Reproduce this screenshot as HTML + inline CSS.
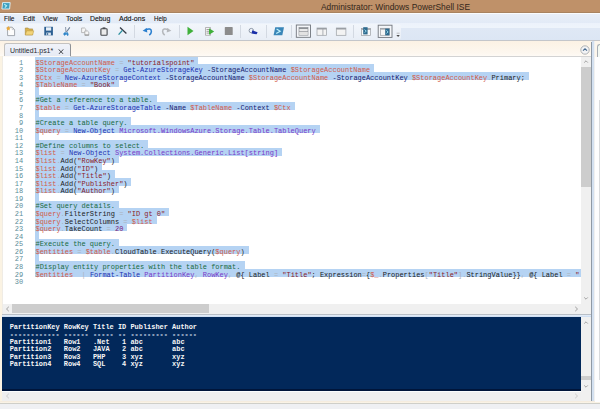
<!DOCTYPE html>
<html><head><meta charset="utf-8">
<style>
*{margin:0;padding:0;box-sizing:border-box}
html,body{width:600px;height:409px;overflow:hidden;background:#f0f0f0;font-family:"Liberation Sans",sans-serif}
.abs{position:absolute}
#title{position:absolute;left:0;top:0;width:600px;height:13px;background:#bf9169;border-bottom:1px solid #a98360}
#ttext{position:absolute;left:321.2px;top:1.6px;font-size:8.7px;line-height:11px;color:#33261a;white-space:nowrap;transform-origin:0 0;transform:scaleX(0.968)}
#menu{position:absolute;left:0;top:13px;width:600px;height:11px;background:linear-gradient(#e9eff8,#e1eaf6);border-top:1.5px solid #fafcfe}
.mi{position:absolute;font-size:8.1px;line-height:9px;color:#111;-webkit-text-stroke:0.12px #111;white-space:nowrap;transform-origin:0 0}
#tb{position:absolute;left:0;top:23px;width:600px;height:17.5px;background:linear-gradient(#ecf2fb 0,#eef4fb 5px,#dfe8f5 5.5px,#dce6f4);border-bottom:1px solid #c4c6ca}
#tbband{position:absolute;left:0;top:24px;width:401px;height:15.5px;background:linear-gradient(#f2f6fb,#e8eef6);border-radius:0 3px 3px 0}
.sep{position:absolute;top:25px;width:1px;height:13px;background:#d3d9e2}
#tabstrip{position:absolute;left:0;top:40.5px;width:591px;height:16px;background:linear-gradient(#fcf2e4,#fdf7ef 12px,#fefbf7)}
#tab{position:absolute;left:3.6px;top:42.8px;width:67px;height:13.7px;border:1px solid #c4c2c0;border-right-color:#8e9196;border-bottom:none;border-radius:2.5px 2.5px 0 0;background:linear-gradient(#f1f3f9,#e6eaf4)}
#tabt{position:absolute;left:9.9px;top:45.6px;font-size:7.3px;line-height:10px;color:#262a30;white-space:nowrap;transform-origin:0 0;transform:scaleX(0.95)}
#tabx{position:absolute;left:57.6px;top:48.6px;width:6px;height:5.5px}
#stripline{position:absolute;left:70px;top:55.8px;width:521px;height:1px;background:#d3d3d3}
#leftstrip{position:absolute;left:0;top:56px;width:3px;height:347px;background:linear-gradient(90deg,#fbf3e3 1.8px,#eeebe6 2.6px)}
#editor{position:absolute;left:3px;top:56.5px;width:578px;height:247px;background:#fff;overflow:hidden}
.sl{position:absolute;left:32px;height:7.8px;background:#b5d3f3}
.cl,.ln{position:absolute;font-family:"Liberation Mono",monospace;font-size:6.98px;line-height:7.57px;white-space:pre;margin-top:2.7px}
.cl{left:32.5px}
.ln{left:0;width:20.1px;text-align:right;color:#5a8d99}
i{font-style:normal}
.v{color:#d25a48}.o{color:#aab2bb}.s{color:#8a1c2a}.c{color:#1d2fb0}.p{color:#18206e}.m{color:#176a40}.a{color:#7a38c8}.n{color:#7a1a7a}.k{color:#1c1c1c}
#vs{position:absolute;left:581px;top:56.5px;width:10px;height:247px;background:#f0f0f0}
#vsthumb{position:absolute;left:581px;top:67px;width:10.3px;height:119.6px;background:#cdcdcd}
#hs{position:absolute;left:3px;top:303.5px;width:578px;height:10px;background:#f0f0f0}
#hsthumb{position:absolute;left:12px;top:303.6px;width:197.3px;height:9.6px;background:#cdcdcd}
#corner{position:absolute;left:581px;top:303.5px;width:10px;height:10px;background:#f0f0f0}
#split{position:absolute;left:2px;top:313.5px;width:589px;height:3.5px;background:linear-gradient(#b9bfc6 0,#b9bfc6 0.6px,#eef4fb 0.6px,#c9daf0 3px,#1c2f52 3.5px)}
#console{position:absolute;left:2px;top:317px;width:579px;height:73.7px;background:linear-gradient(#02285a 72.5px,#00153a 72.5px)}
.cc{position:absolute;left:9.7px;font-family:"Liberation Mono",monospace;font-size:6.95px;line-height:7.5px;white-space:pre;color:#f6f6f6;font-weight:bold}
.dash{color:#8fa2be;text-shadow:0 0.9px 0 #8fa2be}
#cvs{position:absolute;left:581px;top:317px;width:10px;height:84px;background:#f0f0f0}
#chs{position:absolute;left:2px;top:390.7px;width:579px;height:10px;background:linear-gradient(#fafcfd 1.2px,#efefef 1.2px)}
#botline{position:absolute;left:0;top:400.5px;width:600px;height:3px;background:linear-gradient(#f3e9db 0,#faf3e6 1.6px,#c9c9c2 2.2px,#d8d8d4 3px)}
#status{position:absolute;left:0;top:403.5px;width:600px;height:5.5px;background:#eff0f3}
#rsep1{position:absolute;left:591.2px;top:41.5px;width:1.1px;height:359.5px;background:#8f99a5}
#rsep2{position:absolute;left:592.2px;top:41px;width:2.3px;height:360px;background:#d3e0f0}
#rpanel{position:absolute;left:594.5px;top:40.5px;width:5.5px;height:361px;background:#fdfdfe}
#rtab{position:absolute;left:597px;top:44px;width:4px;height:12.5px;border-left:1px solid #a9afb6;border-top:1px solid #a9afb6;border-radius:3px 0 0 0;background:linear-gradient(#f2f8ef,#f4f8f6)}
#rline{position:absolute;left:598.6px;top:100px;width:1px;height:280px;background:#d8dadd}
#rtop{position:absolute;left:594.5px;top:40.5px;width:5.5px;height:16px;background:#fdf6ec}
.arr{position:absolute;font-size:7px;line-height:7px;color:#8a8a8a}
</style></head><body>
<div id="title"></div>
<svg class="abs" style="left:0;top:0" width="14" height="13" viewBox="0 0 14 13"><path d="M2.6 2.6 H10.2 L9.6 9 H1.9 Z" fill="#3d9fbf" stroke="#e4f3f8" stroke-width="0.9"/><path d="M4.3 4.2 L6.6 5.8 L4.8 7.6" stroke="#b8f0f8" stroke-width="1.1" fill="none"/></svg>
<div id="ttext">Administrator: Windows PowerShell ISE</div>
<div id="menu"></div>
<div class="mi" style="left:3.70px;top:14.2px;transform:scaleX(0.805)">File</div>
<div class="mi" style="left:22.50px;top:14.2px;transform:scaleX(0.856)">Edit</div>
<div class="mi" style="left:42.60px;top:14.2px;transform:scaleX(0.834)">View</div>
<div class="mi" style="left:65.50px;top:14.2px;transform:scaleX(0.864)">Tools</div>
<div class="mi" style="left:89.70px;top:14.2px;transform:scaleX(0.850)">Debug</div>
<div class="mi" style="left:119.00px;top:14.2px;transform:scaleX(0.870)">Add-ons</div>
<div class="mi" style="left:154.20px;top:14.2px;transform:scaleX(0.767)">Help</div>
<div id="tb"></div><div id="tbband"></div>
<svg class="abs" style="left:0;top:24px" width="410" height="16" viewBox="0 24 410 16">
<!-- new -->
<path d="M7.6 27.2 H12.2 L14.6 29.6 V35.6 H7.6 Z" fill="#fdfdfd" stroke="#8e949c" stroke-width="0.8"/>
<path d="M12.2 27.2 V29.6 H14.6" fill="none" stroke="#b0b4ba" stroke-width="0.6"/>
<path d="M8.3 26 L9.1 27.5 L10.6 27.8 L9.5 28.9 L9.8 30.4 L8.3 29.7 L6.8 30.4 L7.1 28.9 L6 27.8 L7.5 27.5 Z" fill="#eaa93a"/>
<!-- open -->
<path d="M25.3 28 H28.2 L29 28.9 H32.6 V34.9 H25.3 Z" fill="#d9b24e" stroke="#a98a3a" stroke-width="0.6"/>
<path d="M25.3 34.9 L26.6 30.8 H33.8 L32.6 34.9 Z" fill="#f2d47a" stroke="#b8963e" stroke-width="0.5"/>
<!-- save -->
<rect x="44.3" y="26.8" width="8.6" height="8.6" fill="#2b5f92"/>
<rect x="46" y="27.3" width="5.2" height="3.3" fill="#e9f0f7"/>
<rect x="46.3" y="32.6" width="4.6" height="2.8" fill="#dce6f0"/>
<rect x="47" y="33.2" width="1.2" height="1.6" fill="#2b5f92"/>
<!-- cut -->
<path d="M65.6 27 L65.9 32" stroke="#8a98aa" stroke-width="1"/>
<path d="M69.8 27.4 L66.4 32" stroke="#6d7f96" stroke-width="1.1"/>
<path d="M64 33 Q63.3 35.3 65 35.2 Q66.2 34.6 66 32.8 Z M66.6 32.8 Q66.6 35.6 68 35.4 Q68.4 34 67.4 32.6 Z" fill="#2f86c8" stroke="#2f86c8" stroke-width="0.9"/>
<!-- copy -->
<path d="M81.6 28 H84.6 L85.8 29.2 V32.6 H81.6 Z" fill="#f6f6f6" stroke="#a2a2a2" stroke-width="0.7"/>
<path d="M84.8 31 H87.6 L88.8 32.2 V35.2 H84.8 Z" fill="#f6f6f6" stroke="#a2a2a2" stroke-width="0.7"/>
<path d="M84.8 35 H88.8" stroke="#7a7a7a" stroke-width="0.8"/>
<!-- paste -->
<rect x="100.9" y="28.7" width="6.2" height="6.5" rx="0.7" fill="#ececec" stroke="#46494d" stroke-width="1.1"/>
<rect x="102.6" y="27.4" width="2.8" height="1.5" fill="#46494d"/>
<!-- clear -->
<path d="M120 27.6 L126.4 33.4" stroke="#343c46" stroke-width="1.3"/>
<path d="M118.6 34.6 L122.4 30.4" stroke="#2b8f9e" stroke-width="1.4"/>
<!-- undo -->
<path d="M145.2 29.7 Q151.3 27.6 151.4 31.4 Q151.3 33.6 149.3 35.2" stroke="#2a7fcf" stroke-width="1.5" fill="none"/>
<path d="M142.6 30.8 L146.8 28 L147.3 32.6 Z" fill="#2a7fcf"/>
<!-- redo -->
<path d="M168.8 29.7 Q162.7 27.6 162.6 31.4 Q162.7 33.6 164.7 35.2" stroke="#b4b7bb" stroke-width="1.5" fill="none"/>
<path d="M171.4 30.8 L167.2 28 L166.7 32.6 Z" fill="#b4b7bb"/>
<!-- run -->
<path d="M187.5 26.8 L193.5 31 L187.5 35.3 Z" fill="#3fb03a"/>
<!-- run selection -->
<path d="M205.5 27.5 H210.5 V35.3 H205.5 Z" fill="#f6f6f6" stroke="#9a9a9a" stroke-width="0.7"/>
<path d="M206.5 29.5 H209 M206.5 31.3 H209 M206.5 33.1 H209" stroke="#7a7a7a" stroke-width="0.7"/>
<path d="M209 28.3 L214.2 31.5 L209 34.8 Z" fill="#3fb03a"/>
<!-- stop -->
<rect x="224.8" y="27.1" width="7.9" height="7.9" rx="0.6" fill="#8c8c8c"/>
<!-- remote -->
<circle cx="251.3" cy="30.6" r="2.2" fill="none" stroke="#8d98a8" stroke-width="1"/>
<path d="M252.2 30.2 L257.6 32.3 L256.6 34.2 L251.6 33.6 Z" fill="#1a2fa8"/>
<!-- PS -->
<path d="M275.2 27.2 H284 L282.3 35.2 H273.6 Z" fill="#3a86b8"/>
<path d="M276.6 28.9 L280.2 31.2 L276.2 33.6" stroke="#bff0fb" stroke-width="1.2" fill="none"/>
<!-- pressed layout btn -->
<rect x="296.3" y="25" width="14.2" height="12.3" fill="#f4f6f9" stroke="#70757c" stroke-width="0.9"/>
<rect x="299" y="27.6" width="9" height="7.6" fill="#f3f3f3" stroke="#8d9196" stroke-width="0.7"/>
<rect x="299" y="27.6" width="9" height="1.5" fill="#8d9196"/>
<path d="M299 31.4 H308" stroke="#8d9196" stroke-width="0.8"/>
<rect x="299.6" y="32" width="7.8" height="2.8" fill="#e2e2e2"/>
<!-- layout 2 -->
<rect x="317" y="28" width="9.5" height="7.3" fill="#f3f3f3" stroke="#9a9ea4" stroke-width="0.7"/>
<rect x="317" y="28" width="9.5" height="1.5" fill="#9a9ea4"/>
<path d="M322.9 28 V35.3" stroke="#9a9ea4" stroke-width="0.8"/>
<!-- layout 3 -->
<rect x="336.3" y="28" width="9.6" height="7.3" fill="#f3f3f3" stroke="#9a9ea4" stroke-width="0.7"/>
<rect x="336.3" y="28" width="9.6" height="1.5" fill="#9a9ea4"/>
<!-- show script pane -->
<rect x="361.6" y="28.6" width="9" height="6.8" fill="#fafafa" stroke="#9a9ea4" stroke-width="0.7"/>
<rect x="361.6" y="28.6" width="9" height="1.2" fill="#9a9ea4"/>
<rect x="363.2" y="27.2" width="4.4" height="7.2" fill="#2e6a8e"/>
<path d="M364.5 29.6 L366.3 31.1 L364.5 32.6" stroke="#9fe2f5" stroke-width="0.9" fill="none"/>
<!-- pressed show script pane right -->
<rect x="378.2" y="25.2" width="13.8" height="12.2" fill="#f4f6f9" stroke="#70757c" stroke-width="0.9"/>
<rect x="380.6" y="28.3" width="8.8" height="7" fill="#f6f6f6" stroke="#9a9ea4" stroke-width="0.7"/>
<rect x="380.6" y="28.3" width="8.8" height="1.3" fill="#9a9ea4"/>
<rect x="385.2" y="28.6" width="4.2" height="6.7" fill="#2e6a8e"/>
<path d="M386.4 30.4 L388.1 31.9 L386.4 33.4" stroke="#9fe2f5" stroke-width="0.9" fill="none"/>
<!-- overflow -->
<path d="M396.6 33.2 H399.6" stroke="#9a9a9a" stroke-width="0.6"/>
<path d="M396.4 35.1 H399.8 L398.1 37 Z" fill="#4a4a4a"/>
</svg>
<div class="sep" style="left:134px"></div>
<div class="sep" style="left:178.5px"></div>
<div class="sep" style="left:240px"></div>
<div class="sep" style="left:266px"></div>
<div class="sep" style="left:291px"></div>
<div class="sep" style="left:353px"></div>

<div id="tabstrip"></div>
<div id="stripline"></div>
<div id="leftstrip"></div>
<div id="tab"></div>
<div id="tabt">Untitled1.ps1*</div>
<svg id="tabx" viewBox="0 0 6 5.5"><path d="M0.5 0.3 L5.5 5.2 M5.5 0.3 L0.5 5.2" stroke="#3a3d42" stroke-width="0.95"/></svg>
<svg class="abs" style="left:579.5px;top:45px" width="10" height="10" viewBox="0 0 10 10"><circle cx="5" cy="5" r="4.2" fill="#f2f3f5" stroke="#a9abae" stroke-width="0.9"/><path d="M3 5.6 L5 3.8 L7 5.6" stroke="#46698e" stroke-width="1.1" fill="none"/></svg>
<div id="editor">
<div class="sl" style="top:0.40px;width:163.41px;height:7.8px"></div>
<div class="sl" style="top:7.97px;width:339.39px;height:7.8px"></div>
<div class="sl" style="top:15.54px;width:494.42px;height:7.8px"></div>
<div class="sl" style="top:23.11px;width:83.80px;height:7.8px"></div>
<div class="sl" style="top:30.68px;width:4.19px;height:7.8px"></div>
<div class="sl" style="top:38.25px;width:121.51px;height:7.8px"></div>
<div class="sl" style="top:45.82px;width:259.78px;height:7.8px"></div>
<div class="sl" style="top:53.39px;width:4.19px;height:7.8px"></div>
<div class="sl" style="top:60.96px;width:96.37px;height:7.8px"></div>
<div class="sl" style="top:68.53px;width:284.92px;height:7.8px"></div>
<div class="sl" style="top:76.10px;width:4.19px;height:7.8px"></div>
<div class="sl" style="top:83.67px;width:113.13px;height:7.8px"></div>
<div class="sl" style="top:91.24px;width:247.21px;height:7.8px"></div>
<div class="sl" style="top:98.81px;width:83.80px;height:7.8px"></div>
<div class="sl" style="top:106.38px;width:67.04px;height:7.8px"></div>
<div class="sl" style="top:113.95px;width:79.61px;height:7.8px"></div>
<div class="sl" style="top:121.52px;width:96.37px;height:7.8px"></div>
<div class="sl" style="top:129.09px;width:83.80px;height:7.8px"></div>
<div class="sl" style="top:136.66px;width:4.19px;height:7.8px"></div>
<div class="sl" style="top:144.23px;width:83.80px;height:7.8px"></div>
<div class="sl" style="top:151.80px;width:134.08px;height:7.8px"></div>
<div class="sl" style="top:159.37px;width:121.51px;height:7.8px"></div>
<div class="sl" style="top:166.94px;width:92.18px;height:7.8px"></div>
<div class="sl" style="top:174.51px;width:4.19px;height:7.8px"></div>
<div class="sl" style="top:182.08px;width:83.80px;height:7.8px"></div>
<div class="sl" style="top:189.65px;width:213.69px;height:7.8px"></div>
<div class="sl" style="top:197.22px;width:4.19px;height:7.8px"></div>
<div class="sl" style="top:204.79px;width:209.50px;height:7.8px"></div>
<div class="sl" style="top:212.36px;width:600.00px;height:8.6px"></div>
<div class="ln" style="top:0.40px">1</div>
<div class="ln" style="top:7.97px">2</div>
<div class="ln" style="top:15.54px">3</div>
<div class="ln" style="top:23.11px">4</div>
<div class="ln" style="top:30.68px">5</div>
<div class="ln" style="top:38.25px">6</div>
<div class="ln" style="top:45.82px">7</div>
<div class="ln" style="top:53.39px">8</div>
<div class="ln" style="top:60.96px">9</div>
<div class="ln" style="top:68.53px">10</div>
<div class="ln" style="top:76.10px">11</div>
<div class="ln" style="top:83.67px">12</div>
<div class="ln" style="top:91.24px">13</div>
<div class="ln" style="top:98.81px">14</div>
<div class="ln" style="top:106.38px">15</div>
<div class="ln" style="top:113.95px">16</div>
<div class="ln" style="top:121.52px">17</div>
<div class="ln" style="top:129.09px">18</div>
<div class="ln" style="top:136.66px">19</div>
<div class="ln" style="top:144.23px">20</div>
<div class="ln" style="top:151.80px">21</div>
<div class="ln" style="top:159.37px">22</div>
<div class="ln" style="top:166.94px">23</div>
<div class="ln" style="top:174.51px">24</div>
<div class="ln" style="top:182.08px">25</div>
<div class="ln" style="top:189.65px">26</div>
<div class="ln" style="top:197.22px">27</div>
<div class="ln" style="top:204.79px">28</div>
<div class="ln" style="top:212.36px">29</div>
<div class="ln" style="top:219.93px">30</div>
<div class="cl" style="top:0.40px"><i class="v">$StorageAccountName</i><i class="o"> = </i><i class="s">&quot;tutorialspoint&quot;</i></div>
<div class="cl" style="top:7.97px"><i class="v">$StorageAccountKey</i><i class="o"> = </i><i class="c">Get-AzureStorageKey</i> <i class="p">-StorageAccountName</i> <i class="v">$StorageAccountName</i></div>
<div class="cl" style="top:15.54px"><i class="v">$Ctx</i><i class="o"> = </i><i class="c">New-AzureStorageContext</i> <i class="p">-StorageAccountName</i> <i class="v">$StorageAccountName</i> <i class="p">-StorageAccountKey</i> <i class="v">$StorageAccountKey</i><i class="o">.</i><i class="k">Primary;</i></div>
<div class="cl" style="top:23.11px"><i class="v">$TableName</i><i class="o"> = </i><i class="s">&quot;Book&quot;</i></div>
<div class="cl" style="top:30.68px"></div>
<div class="cl" style="top:38.25px"><i class="m">#Get a reference to a table.</i></div>
<div class="cl" style="top:45.82px"><i class="v">$table</i><i class="o"> = </i><i class="c">Get-AzureStorageTable</i> <i class="p">-Name</i> <i class="v">$TableName</i> <i class="p">-Context</i> <i class="v">$Ctx</i></div>
<div class="cl" style="top:53.39px"></div>
<div class="cl" style="top:60.96px"><i class="m">#Create a table query.</i></div>
<div class="cl" style="top:68.53px"><i class="v">$query</i><i class="o"> = </i><i class="c">New-Object</i> <i class="a">Microsoft.WindowsAzure.Storage.Table.TableQuery</i></div>
<div class="cl" style="top:76.10px"></div>
<div class="cl" style="top:83.67px"><i class="m">#Define columns to select.</i></div>
<div class="cl" style="top:91.24px"><i class="v">$list</i><i class="o"> = </i><i class="c">New-Object</i> <i class="a">System.Collections.Generic.List[string]</i></div>
<div class="cl" style="top:98.81px"><i class="v">$list</i><i class="o">.</i><i class="k">Add(</i><i class="s">&quot;RowKey&quot;</i><i class="k">)</i></div>
<div class="cl" style="top:106.38px"><i class="v">$list</i><i class="o">.</i><i class="k">Add(</i><i class="s">&quot;ID&quot;</i><i class="k">)</i></div>
<div class="cl" style="top:113.95px"><i class="v">$list</i><i class="o">.</i><i class="k">Add(</i><i class="s">&quot;Title&quot;</i><i class="k">)</i></div>
<div class="cl" style="top:121.52px"><i class="v">$list</i><i class="o">.</i><i class="k">Add(</i><i class="s">&quot;Publisher&quot;</i><i class="k">)</i></div>
<div class="cl" style="top:129.09px"><i class="v">$list</i><i class="o">.</i><i class="k">Add(</i><i class="s">&quot;Author&quot;</i><i class="k">)</i></div>
<div class="cl" style="top:136.66px"></div>
<div class="cl" style="top:144.23px"><i class="m">#Set query details.</i></div>
<div class="cl" style="top:151.80px"><i class="v">$query</i><i class="o">.</i><i class="k">FilterString</i><i class="o"> = </i><i class="s">&quot;ID gt 0&quot;</i></div>
<div class="cl" style="top:159.37px"><i class="v">$query</i><i class="o">.</i><i class="k">SelectColumns</i><i class="o"> = </i><i class="v">$list</i></div>
<div class="cl" style="top:166.94px"><i class="v">$query</i><i class="o">.</i><i class="k">TakeCount</i><i class="o"> = </i><i class="n">20</i></div>
<div class="cl" style="top:174.51px"></div>
<div class="cl" style="top:182.08px"><i class="m">#Execute the query.</i></div>
<div class="cl" style="top:189.65px"><i class="v">$entities</i><i class="o"> = </i><i class="v">$table</i><i class="o">.</i><i class="k">CloudTable</i><i class="o">.</i><i class="k">ExecuteQuery(</i><i class="v">$query</i><i class="k">)</i></div>
<div class="cl" style="top:197.22px"></div>
<div class="cl" style="top:204.79px"><i class="m">#Display entity properties with the table format.</i></div>
<div class="cl" style="top:212.36px"><i class="v">$entities</i><i class="o">  | </i><i class="c">Format-Table</i> <i class="a">PartitionKey</i><i class="o">, </i><i class="a">RowKey</i><i class="o">, </i><i class="k">@{ Label</i><i class="o"> = </i><i class="s">&quot;Title&quot;</i><i class="k">; Expression</i><i class="o">=</i><i class="k">{</i><i class="v">$_</i><i class="o">.</i><i class="k">Properties</i><i class="o">[</i><i class="s">&quot;Title&quot;</i><i class="o">].</i><i class="k">StringValue}}</i><i class="o">, </i><i class="k">@{ Label</i><i class="o"> = </i><i class="s">&quot;</i></div>
<div class="cl" style="top:219.93px"></div>
</div>
<div id="vs"></div>
<div id="vsthumb"></div>
<svg class="abs" style="left:583px;top:59px" width="6" height="5" viewBox="0 0 6 5"><path d="M1.2 3.6 L3 1.8 L4.8 3.6" stroke="#8a8a8a" stroke-width="0.75" fill="none"/></svg>
<svg class="abs" style="left:583px;top:296px" width="6" height="5" viewBox="0 0 6 5"><path d="M1.2 1.4 L3 3.2 L4.8 1.4" stroke="#8a8a8a" stroke-width="0.75" fill="none"/></svg>
<div id="hs"></div>
<div id="hsthumb"></div>
<svg class="abs" style="left:5px;top:305.5px" width="5" height="6" viewBox="0 0 5 6"><path d="M3.8 0.8 L1.5 3 L3.8 5.2" stroke="#8a8a8a" stroke-width="0.8" fill="none"/></svg>
<svg class="abs" style="left:574px;top:305.5px" width="5" height="6" viewBox="0 0 5 6"><path d="M1.2 0.8 L3.5 3 L1.2 5.2" stroke="#8a8a8a" stroke-width="0.8" fill="none"/></svg>
<div id="corner"></div>
<div id="split"></div>
<div id="console">
</div>
<div class="cc" style="top:323.80px">PartitionKey RowKey Title ID Publisher Author</div>
<div class="cc dash" style="top:331.30px">------------ ------ ----- -- --------- ------</div>
<div class="cc" style="top:338.80px">Partition1   Row1   .Net   1 abc       abc</div>
<div class="cc" style="top:346.30px">Partition2   Row2   JAVA   2 abc       abc</div>
<div class="cc" style="top:353.80px">Partition3   Row3   PHP    3 xyz       xyz</div>
<div class="cc" style="top:361.30px">Partition4   Row4   SQL    4 xyz       xyz</div>
<div id="cvs"></div>
<div class="abs" style="left:581px;top:375.5px;width:10px;height:4px;background:#cdcdcd"></div>
<svg class="abs" style="left:583px;top:320px" width="6" height="5" viewBox="0 0 6 5"><path d="M1.2 3.6 L3 1.8 L4.8 3.6" stroke="#8a8a8a" stroke-width="0.75" fill="none"/></svg>
<svg class="abs" style="left:583px;top:384px" width="6" height="5" viewBox="0 0 6 5"><path d="M1.2 1.4 L3 3.2 L4.8 1.4" stroke="#8a8a8a" stroke-width="0.75" fill="none"/></svg>
<div id="chs"></div>
<svg class="abs" style="left:5px;top:393px" width="5" height="6" viewBox="0 0 5 6"><path d="M3.8 0.8 L1.5 3 L3.8 5.2" stroke="#c0c0c0" stroke-width="0.8" fill="none"/></svg>
<svg class="abs" style="left:574px;top:393px" width="5" height="6" viewBox="0 0 5 6"><path d="M1.2 0.8 L3.5 3 L1.2 5.2" stroke="#c0c0c0" stroke-width="0.8" fill="none"/></svg>
<div id="botline"></div>
<div id="status"></div>
<div id="rsep1"></div>
<div id="rsep2"></div>
<div id="rpanel"></div>
<div id="rtop"></div><div id="rtab"></div><div id="rline"></div>
</body></html>
